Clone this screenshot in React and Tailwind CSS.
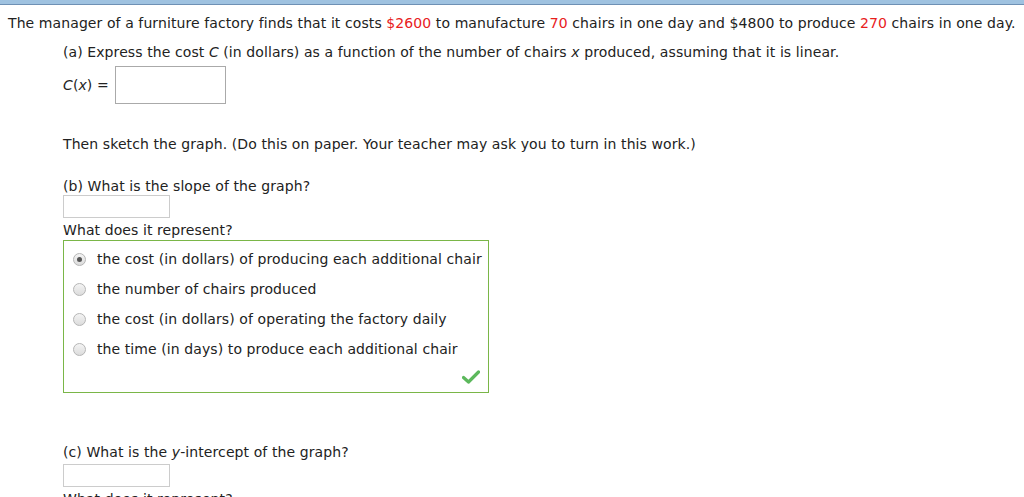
export default function App() {
  const options = [
    'the cost (in dollars) of producing each additional chair',
    'the number of chairs produced',
    'the cost (in dollars) of operating the factory daily',
    'the time (in days) to produce each additional chair',
  ];

  return (
    <div className="w-[1024px] h-[497px] overflow-hidden bg-white text-[#222] text-[14px] leading-[17px] tracking-[0.09px]" style={{ fontFamily: '"DejaVu Sans", Verdana, sans-serif' }}>
      <div className="h-[5px] bg-[#9fc2e0] border-b border-[#6e90b4]" />
      <p className="pl-[8px] pt-[10px]">
        The manager of a furniture factory finds that it costs <span className="text-[#e8201c]">$2600</span> to manufacture <span className="text-[#e8201c]">70</span> chairs in one day and $4800 to produce <span className="text-[#e8201c]">270</span> chairs in one day.
      </p>

      <div className="pl-[63px]">
        <p className="mt-[12px]">
          (a) Express the cost <i>C</i> (in dollars) as a function of the number of chairs <i>x</i> produced, assuming that it is linear.
        </p>
        <div className="mt-[5px] flex items-center gap-[6px]">
          <span><i>C</i>(<i>x</i>) =</span>
          <div className="w-[111px] h-[38px] border border-[#aaa] bg-white" />
        </div>

        <p className="mt-[32px]">Then sketch the graph. (Do this on paper. Your teacher may ask you to turn in this work.)</p>

        <p className="mt-[25px]">(b) What is the slope of the graph?</p>
        <div className="w-[107px] h-[23px] border border-[#ccc]" />
        <p className="mt-[4px]">What does it represent?</p>

        <div className="mt-[1px] w-[426px] h-[153px] border border-[#7ab648] relative">
          <div className="pt-[10px] pl-[9px] flex flex-col gap-[13px]">
            {options.map((o, i) => (
              <label key={i} className="flex items-center gap-[11px]">
                <span className="w-[13px] h-[13px] rounded-full border border-[#b5b5b5] bg-gradient-to-b from-[#f4f4f4] to-[#dcdcdc] flex items-center justify-center">
                  {i === 0 && <span className="w-[5px] h-[5px] rounded-full bg-[#555]" />}
                </span>
                <span>{o}</span>
              </label>
            ))}
          </div>
          <svg className="absolute right-[8px] bottom-[8px]" width="18" height="14" viewBox="0 0 18 14">
            <path d="M1.5 7.5 L6.5 12 L16.5 2" fill="none" stroke="#5cb85c" strokeWidth="3.2" strokeLinecap="round" strokeLinejoin="round" />
          </svg>
        </div>

        <p className="mt-[51px]">(c) What is the <i>y</i>-intercept of the graph?</p>
        <div className="mt-[3px] w-[107px] h-[23px] border border-[#ccc]" />
        <p className="mt-[4px]">What does it represent?</p>
      </div>
    </div>
  );
}
